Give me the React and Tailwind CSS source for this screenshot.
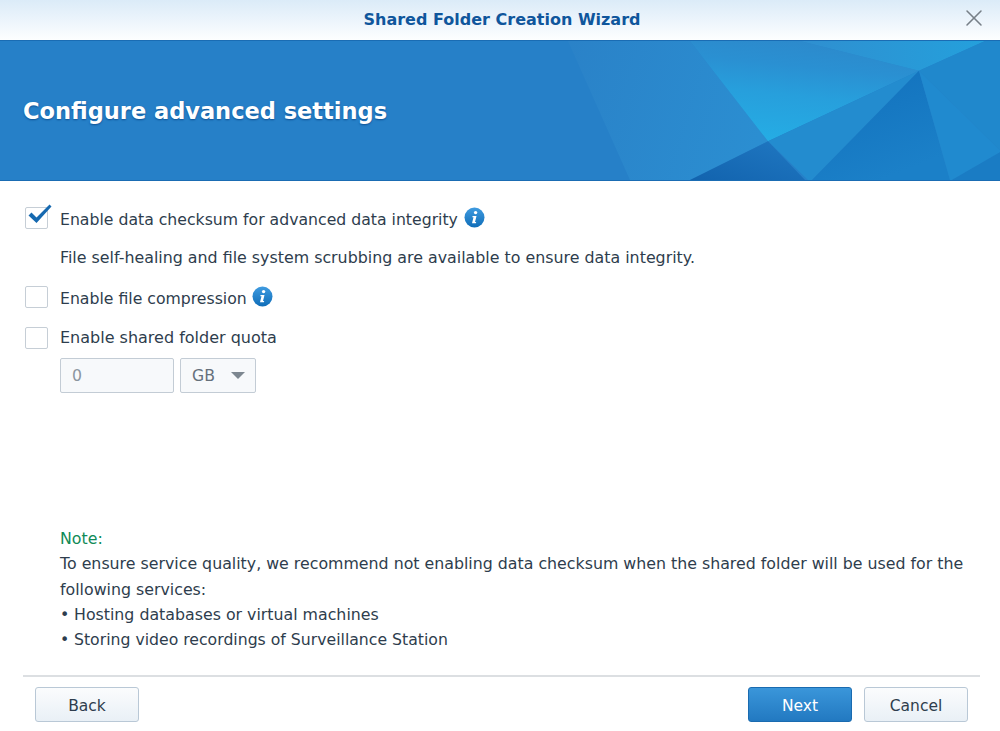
import { X } from "lucide-react";

const font = { fontFamily: '"DejaVu Sans", Verdana, sans-serif' };

const InfoIcon = () => (
  <svg width="21" height="21" viewBox="0 0 21 21" className="shrink-0">
    <defs>
      <linearGradient id="infoFill" x1="0" y1="0" x2="0" y2="1">
        <stop offset="0" stopColor="#3f9be0" />
        <stop offset="1" stopColor="#0f6db8" />
      </linearGradient>
    </defs>
    <circle cx="10.5" cy="10.5" r="10" fill="url(#infoFill)" />
    <circle cx="11.6" cy="5.6" r="1.7" fill="#fff" />
    <path d="M8.6 9h3.9l-1.5 6h1.2l-.3 1.2H8l1.5-6H8.3z" fill="#fff" />
  </svg>
);

const Checkbox = ({ checked }) => (
  <div className="relative w-[23px] h-[22px] shrink-0 border border-[#c6ced6] rounded-[2px] bg-white">
    {checked && (
      <svg width="26" height="22" viewBox="0 0 26 22" className="absolute left-[1px] top-[-5px]">
        <path d="M1.5 12.5l3-3 5 5L22.5 1.5l2 2L9.5 20z" fill="#1669b0" />
      </svg>
    )}
  </div>
);

const Banner = () => (
  <div className="relative h-[141px] shrink-0 flex items-center pl-[23px] pt-[3px] bg-[#2680c8] border-y border-[#1a6cb3] overflow-hidden">
    <svg viewBox="0 0 1000 140" preserveAspectRatio="none" className="absolute inset-0 w-full h-full">
      <defs>
        <linearGradient id="wash" gradientUnits="userSpaceOnUse" x1="570" y1="0" x2="770" y2="60">
          <stop offset="0" stopColor="#2a82c8" />
          <stop offset="1" stopColor="#2b8ed1" />
        </linearGradient>
        <linearGradient id="glow" gradientUnits="userSpaceOnUse" x1="800" y1="0" x2="790" y2="100">
          <stop offset="0" stopColor="#2c8acc" />
          <stop offset="0.25" stopColor="#2a90d2" />
          <stop offset="0.55" stopColor="#279fdc" />
          <stop offset="1" stopColor="#25ace4" />
        </linearGradient>
        <linearGradient id="deep" x1="0" y1="0" x2="0.5" y2="1">
          <stop offset="0" stopColor="#1170bc" />
          <stop offset="1" stopColor="#1b80c8" />
        </linearGradient>
        <linearGradient id="deepLeft" x1="0" y1="1" x2="1" y2="0">
          <stop offset="0" stopColor="#1263ae" />
          <stop offset="1" stopColor="#2078c2" />
        </linearGradient>
        <linearGradient id="topLight" x1="0" y1="0" x2="1" y2="0">
          <stop offset="0" stopColor="#2f8fd0" />
          <stop offset="1" stopColor="#24a0dc" />
        </linearGradient>
      </defs>
      <polygon points="568,0 690,0 768,101 690,140 630,140" fill="url(#wash)" />
      <polygon points="690,0 800,0 919,30 768,101" fill="url(#glow)" />
      <polygon points="800,0 985,0 919,30" fill="url(#topLight)" />
      <polygon points="985,0 1000,0 1000,110 919,30" fill="#2088cc" />
      <polygon points="919,30 768,101 808,140 812,140" fill="#238ccf" />
      <polygon points="768,101 690,140 805,140" fill="url(#deepLeft)" />
      <polygon points="919,30 812,140 950,140" fill="url(#deep)" />
      <polygon points="919,30 1000,110 1000,112 952,140 950,140" fill="#208acf" />
      <polygon points="1000,112 952,140 1000,140" fill="#1a7cc4" />
    </svg>
    <h1 className="relative text-[22.5px] font-bold text-white [text-shadow:0_1px_2px_#0d4f92]">
      Configure advanced settings
    </h1>
  </div>
);

export default function App() {
  return (
    <div style={font} className="w-[1000px] h-[731px] flex flex-col bg-white text-[#2e3d4d] overflow-hidden">
      {/* title bar */}
      <div className="relative h-[40px] shrink-0 flex items-center justify-center pl-[4px] bg-gradient-to-b from-[#dbebf8] to-[#fdfeff]">
        <span className="text-[16px] font-bold text-[#0f569c]">Shared Folder Creation Wizard</span>
        <X size={28} strokeWidth={1.3} className="absolute right-[12px] top-[4px] text-[#777f87]" />
      </div>

      <Banner />

      {/* form */}
      <div className="flex flex-col text-[15.7px] pl-[25px] pt-[24px]">
        <div className="h-[25px] flex items-center gap-[12px]">
          <Checkbox checked />
          <span className="pt-[4px]">Enable data checksum for advanced data integrity</span>
          <div className="-ml-[6px]">
            <InfoIcon />
          </div>
        </div>
        <div className="h-[25px] flex items-center pl-[35px] mt-[15px] text-[15.85px]">
          File self-healing and file system scrubbing are available to ensure data integrity.
        </div>
        <div className="h-[25px] flex items-center gap-[12px] mt-[14px]">
          <Checkbox />
          <span className="pt-[4px]">Enable file compression</span>
          <div className="-ml-[7px]">
            <InfoIcon />
          </div>
        </div>
        <div className="h-[25px] flex items-center gap-[12px] mt-[16px] text-[16px]">
          <Checkbox />
          <span>Enable shared folder quota</span>
        </div>
        <div className="flex gap-[6px] pl-[35px] mt-[8px]">
          <div className="w-[114px] h-[35px] flex items-center pl-[11px] border border-[#c3ccd5] rounded-[2px] bg-[#f7f9fb] text-[#8b959f]">
            0
          </div>
          <div className="w-[76px] h-[35px] flex items-center justify-between pl-[11px] pr-[10px] border border-[#c3ccd5] rounded-[2px] bg-[#f7f9fb] text-[#65707b]">
            <span>GB</span>
            <div className="w-0 h-0 border-x-[7px] border-x-transparent border-t-[7px] border-t-[#7d8790]" />
          </div>
        </div>
      </div>

      {/* note */}
      <div className="flex flex-col text-[15.8px] leading-[25.3px] pl-[60px] pr-[30px] mt-[133px]">
        <div className="text-[#108a57]">Note:</div>
        <div>
          To ensure service quality, we recommend not enabling data checksum when the shared folder will be used for the following services:
        </div>
        <div className="flex gap-[7px]">
          <span className="w-[7px] text-center">•</span>
          <span>Hosting databases or virtual machines</span>
        </div>
        <div className="flex gap-[7px] text-[15.7px]">
          <span className="w-[7px] text-center">•</span>
          <span>Storing video recordings of Surveillance Station</span>
        </div>
      </div>

      {/* footer */}
      <div className="ml-[23px] mr-[20px] mt-[23px] border-t-2 border-[#dcdfe2]" />
      <div className="flex items-center justify-between text-[15.5px] pl-[35px] pr-[32px] mt-[10px]">
        <button className="w-[104px] h-[35px] pt-[3px] rounded-[3px] border border-[#b9c8d6] bg-gradient-to-b from-[#fbfcfd] to-[#e9f0f6] text-[#2e3d4d]">
          Back
        </button>
        <div className="flex gap-[12px]">
          <button className="w-[104px] h-[35px] pt-[3px] rounded-[3px] border border-[#1a6bb0] bg-gradient-to-b from-[#3a96da] to-[#2279c1] text-white">
            Next
          </button>
          <button className="w-[104px] h-[35px] pt-[3px] rounded-[3px] border border-[#b9c8d6] bg-gradient-to-b from-[#fbfcfd] to-[#e9f0f6] text-[#2e3d4d]">
            Cancel
          </button>
        </div>
      </div>
    </div>
  );
}
